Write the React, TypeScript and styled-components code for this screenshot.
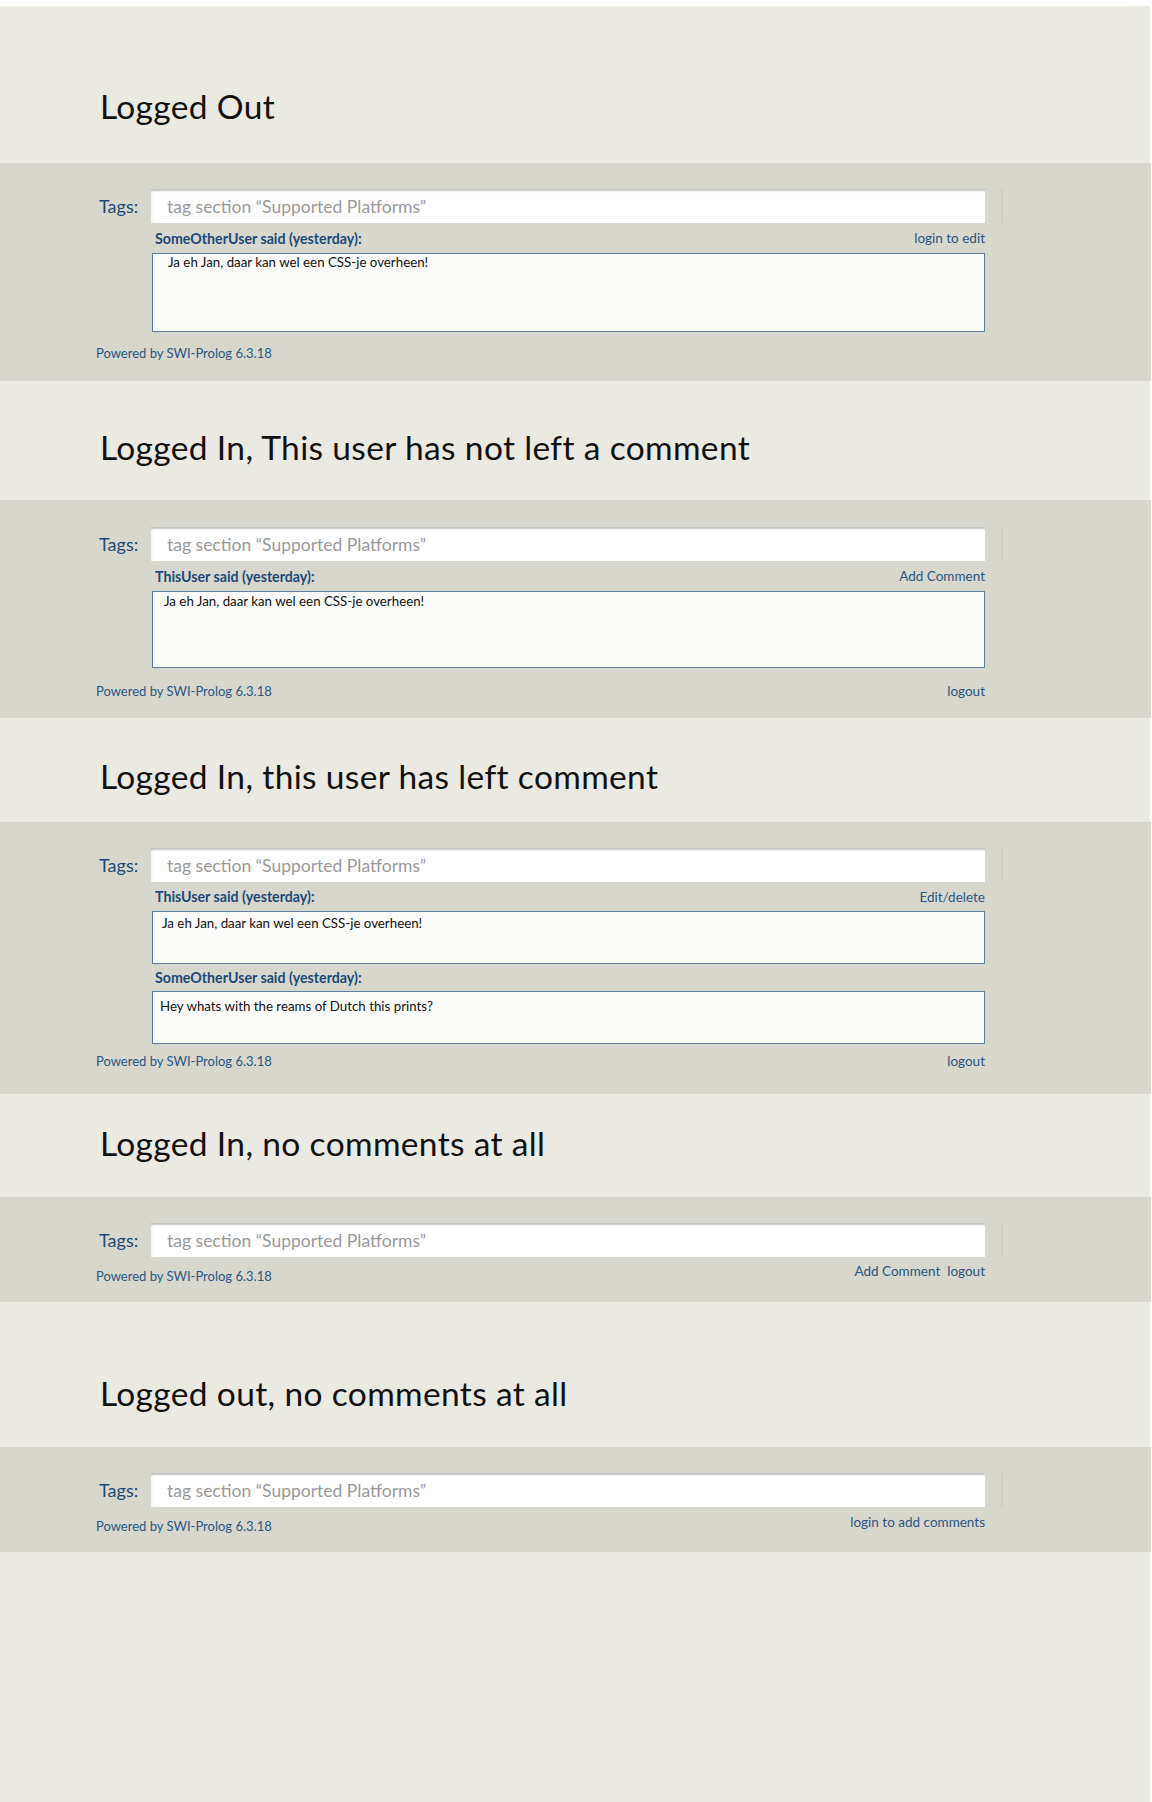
import React from 'react';
import styled, { createGlobalStyle } from 'styled-components';

const Global = createGlobalStyle`
  html, body { margin: 0; padding: 0; background: #ffffff; }
  body { font-family: Lato, "Open Sans", sans-serif; }
`;

const Page = styled.main`
  width: 1150px;
  min-height: 1796px;
  margin-top: 6px;
  background: #eae9e2;
`;

const TitleArea = styled.header<{ $pt: number; $pb: number }>`
  padding: ${(p) => p.$pt}px 0 ${(p) => p.$pb}px 100px;
`;

const Title = styled.h1`
  margin: 0;
  font-weight: 400;
  font-size: 33.5px;
  letter-spacing: 0.35px;
  line-height: 40px;
  color: #111111;
`;

const Band = styled.section<{ $pt: number; $pb: number }>`
  width: 1151px;
  box-sizing: border-box;
  background: #d8d7ce;
  padding: ${(p) => p.$pt}px 0 ${(p) => p.$pb}px 96px;
`;

const TagsRow = styled.div`
  display: flex;
  align-items: center;
  height: 34px;
`;

const TagsLabel = styled.label`
  width: 55px;
  box-sizing: border-box;
  padding-left: 3px;
  font-size: 18px;
  color: #1f4a73;
`;

const TagInput = styled.input`
  width: 834px;
  height: 34px;
  box-sizing: border-box;
  border: none;
  outline: none;
  margin: 0;
  background: #ffffff;
  box-shadow: inset 0 3px 2px -1px rgba(0, 0, 0, 0.24), inset 3px 0 3px -2px rgba(0, 0, 0, 0.06);
  padding: 0 16px;
  font-family: inherit;
  font-size: 17.5px;
  color: #333;
  &::placeholder {
    color: #9a9a9a;
    opacity: 1;
  }
`;

const Divider = styled.span`
  width: 2px;
  height: 34px;
  margin-left: 16px;
  background: rgba(0, 0, 0, 0.035);
`;

const CommentList = styled.div`
  margin-left: 56px;
  width: 833px;
`;

const CommentHead = styled.div<{ $h: number }>`
  display: flex;
  justify-content: space-between;
  align-items: center;
  height: ${(p) => p.$h}px;
  padding: 0 0 0 3px;
`;

const Author = styled.span`
  font-size: 14.2px;
  font-weight: 700;
  color: #1b4a7a;
`;

const ActionLink = styled.a`
  font-size: 13.5px;
  color: #2b5680;
  text-decoration: none;
  cursor: pointer;
`;

const CommentBox = styled.div<{ $h: number; $pt: number; $pl: number }>`
  height: ${(p) => p.$h}px;
  box-sizing: border-box;
  border: 1px solid #5f7f9f;
  background: #fcfcfa;
  padding: ${(p) => p.$pt}px 8px 0 ${(p) => p.$pl}px;
  font-size: 13.3px;
  line-height: 16px;
  color: #111111;
`;

const Footer = styled.footer<{ $mt: number }>`
  display: flex;
  justify-content: space-between;
  align-items: flex-start;
  width: 889px;
  margin-top: ${(p) => p.$mt}px;
  line-height: 18px;
`;

const FooterLinks = styled.div<{ $raise?: number }>`
  display: flex;
  gap: 7px;
  margin-top: ${(p) => -(p.$raise ?? 0)}px;
`;

const Powered = styled.a`
  font-size: 13px;
  color: #2b5680;
  text-decoration: none;
`;

type Comment = {
  author: string;
  action?: string;
  text: string;
  head: number;
  h: number;
  pt: number;
  pl: number;
};

type SectionData = {
  title: string;
  tpt: number;
  tpb: number;
  comments: Comment[];
  footerMt: number;
  bandPt: number;
  bandPb: number;
  links: string[];
  raise?: number;
};

const JAN = 'Ja eh Jan, daar kan wel een CSS-je overheen!';

const sections: SectionData[] = [
  {
    title: 'Logged Out',
    tpt: 80,
    tpb: 37,
    comments: [
      { author: 'SomeOtherUser said (yesterday):', action: 'login to edit', text: JAN, head: 30, h: 79, pt: 0, pl: 15 },
    ],
    footerMt: 12,
    bandPt: 26,
    bandPb: 19,
    links: [],
  },
  {
    title: 'Logged In, This user has not left a comment',
    tpt: 46,
    tpb: 33,
    comments: [
      { author: 'ThisUser said (yesterday):', action: 'Add Comment', text: JAN, head: 30, h: 77, pt: 1, pl: 11 },
    ],
    footerMt: 14,
    bandPt: 27,
    bandPb: 18,
    links: ['logout'],
  },
  {
    title: 'Logged In, this user has left comment',
    tpt: 38,
    tpb: 26,
    comments: [
      { author: 'ThisUser said (yesterday):', action: 'Edit/delete', text: JAN, head: 29, h: 53, pt: 3, pl: 9 },
      { author: 'SomeOtherUser said (yesterday):', text: 'Hey whats with the reams of Dutch this prints?', head: 27, h: 53, pt: 6, pl: 7 },
    ],
    footerMt: 8,
    bandPt: 26,
    bandPb: 24,
    links: ['logout'],
  },
  {
    title: 'Logged In, no comments at all',
    tpt: 29,
    tpb: 34,
    comments: [],
    footerMt: 10,
    bandPt: 26,
    bandPb: 17,
    links: ['Add Comment', 'logout'],
    raise: 5,
  },
  {
    title: 'Logged out, no comments at all',
    tpt: 71,
    tpb: 34,
    comments: [],
    footerMt: 10,
    bandPt: 26,
    bandPb: 17,
    links: ['login to add comments'],
    raise: 4,
  },
];

function Section({ s }: { s: SectionData }) {
  return (
    <>
      <TitleArea $pt={s.tpt} $pb={s.tpb}>
        <Title>{s.title}</Title>
      </TitleArea>
      <Band $pt={s.bandPt} $pb={s.bandPb}>
        <TagsRow>
          <TagsLabel>Tags:</TagsLabel>
          <TagInput placeholder={'tag section \u201cSupported Platforms\u201d'} />
          <Divider />
        </TagsRow>
        {s.comments.length > 0 && (
          <CommentList>
            {s.comments.map((c, i) => (
              <React.Fragment key={i}>
                <CommentHead $h={c.head}>
                  <Author>{c.author}</Author>
                  {c.action && <ActionLink>{c.action}</ActionLink>}
                </CommentHead>
                <CommentBox $h={c.h} $pt={c.pt} $pl={c.pl}>
                  {c.text}
                </CommentBox>
              </React.Fragment>
            ))}
          </CommentList>
        )}
        <Footer $mt={s.footerMt}>
          <Powered>Powered by SWI-Prolog 6.3.18</Powered>
          <FooterLinks $raise={s.raise}>
            {s.links.map((l) => (
              <ActionLink key={l}>{l}</ActionLink>
            ))}
          </FooterLinks>
        </Footer>
      </Band>
    </>
  );
}

export default function App() {
  return (
    <>
      <Global />
      <Page>
        {sections.map((s) => (
          <Section key={s.title} s={s} />
        ))}
      </Page>
    </>
  );
}
